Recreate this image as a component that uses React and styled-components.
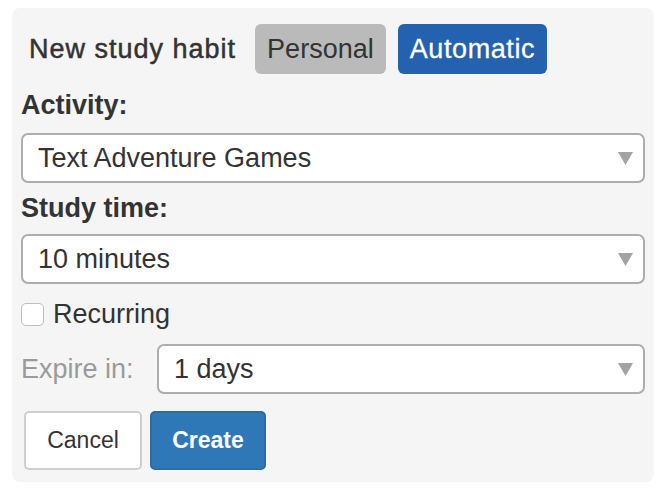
import styled, { createGlobalStyle } from "styled-components";

const GlobalStyle = createGlobalStyle`
  html, body {
    margin: 0;
    padding: 0;
    background: #fff;
  }
  body {
    font-family: "Liberation Sans", Arial, sans-serif;
    color: #333;
  }
`;

const Panel = styled.form`
  box-sizing: border-box;
  width: 642px;
  height: 474px;
  margin: 8px 0 0 12px;
  padding: 16px 9px 12px 9px;
  background: #f5f5f5;
  border-radius: 8px;
  display: flex;
  flex-direction: column;
`;

const Header = styled.div`
  display: flex;
  align-items: center;
  height: 50px;
  padding-left: 8px;
`;

const Title = styled.h4`
  margin: 0 19px 0 0;
  font-size: 27px;
  font-weight: 400;
  letter-spacing: 1px;
  -webkit-text-stroke: 0.5px #333;
  color: #333;
`;

const Toggle = styled.button`
  box-sizing: border-box;
  height: 50px;
  padding: 0 12px;
  margin-right: 12px;
  border: none;
  border-radius: 6px;
  font-family: inherit;
  font-size: 27px;
  background: ${(p) => (p.$active ? "#2461ae" : "#bababa")};
  color: ${(p) => (p.$active ? "#fff" : "#333")};
  letter-spacing: ${(p) => (p.$active ? "0.6px" : "0")};
  -webkit-text-stroke: ${(p) => (p.$active ? "0.3px #fff" : "0")};
`;

const Label = styled.label`
  display: block;
  margin-top: ${(p) => p.$top}px;
  font-size: 27px;
  line-height: 30px;
  font-weight: 700;
  color: #333;
`;

const SelectWrap = styled.div`
  position: relative;
  flex: 1;
  margin-top: ${(p) => p.$top || 0}px;
`;

const Select = styled.select`
  box-sizing: border-box;
  width: 100%;
  height: 50px;
  padding: 0 40px 0 15px;
  appearance: none;
  background: #fff;
  border: 2px solid #adadad;
  border-radius: 7px;
  font-family: inherit;
  font-size: 27px;
  color: #333;
  outline: none;
`;

const Arrow = styled.svg`
  position: absolute;
  right: 12px;
  top: 19px;
  pointer-events: none;
`;

const CheckRow = styled.label`
  display: flex;
  align-items: center;
  margin-top: 19px;
  height: 23px;
  font-size: 27px;
  color: #333;
`;

const Check = styled.input`
  appearance: none;
  box-sizing: border-box;
  width: 23px;
  height: 23px;
  margin: 0 9px 0 0;
  background: #fff;
  border: 1.5px solid #bdbdbd;
  border-radius: 5px;
`;

const ExpireRow = styled.div`
  display: flex;
  align-items: center;
  margin-top: 18px;
`;

const MutedLabel = styled.span`
  width: 136px;
  font-size: 27px;
  color: #9a9a9a;
`;

const Actions = styled.div`
  display: flex;
  gap: 8px;
  margin: 17px 0 0 3px;
`;

const Button = styled.button`
  box-sizing: border-box;
  height: 59px;
  width: ${(p) => (p.$primary ? "116px" : "118px")};
  border-radius: 5px;
  font-family: inherit;
  font-size: 23px;
  font-weight: ${(p) => (p.$primary ? 700 : 400)};
  background: ${(p) => (p.$primary ? "#2f78b8" : "#fff")};
  color: ${(p) => (p.$primary ? "#fff" : "#333")};
  border: 2px solid ${(p) => (p.$primary ? "#2b6ca6" : "#cfcfcf")};
`;

function Dropdown({ top, options }) {
  return (
    <SelectWrap $top={top}>
      <Select defaultValue={options[0]}>
        {options.map((o) => (
          <option key={o}>{o}</option>
        ))}
      </Select>
      <Arrow width="15" height="13" viewBox="0 0 15 13">
        <polygon points="0,0 15,0 7.5,13" fill="#a3a3a3" />
      </Arrow>
    </SelectWrap>
  );
}

export default function App() {
  return (
    <>
      <GlobalStyle />
      <Panel onSubmit={(e) => e.preventDefault()}>
        <Header>
          <Title>New study habit</Title>
          <Toggle type="button">Personal</Toggle>
          <Toggle type="button" $active>
            Automatic
          </Toggle>
        </Header>
        <Label $top={16}>Activity:</Label>
        <Dropdown top={13} options={["Text Adventure Games", "Flashcards", "Reading"]} />
        <Label $top={9}>Study time:</Label>
        <Dropdown top={11} options={["10 minutes", "20 minutes", "30 minutes"]} />
        <CheckRow>
          <Check type="checkbox" />
          Recurring
        </CheckRow>
        <ExpireRow>
          <MutedLabel>Expire in:</MutedLabel>
          <Dropdown options={["1 days", "2 days", "7 days"]} />
        </ExpireRow>
        <Actions>
          <Button type="button">Cancel</Button>
          <Button type="submit" $primary>
            Create
          </Button>
        </Actions>
      </Panel>
    </>
  );
}
